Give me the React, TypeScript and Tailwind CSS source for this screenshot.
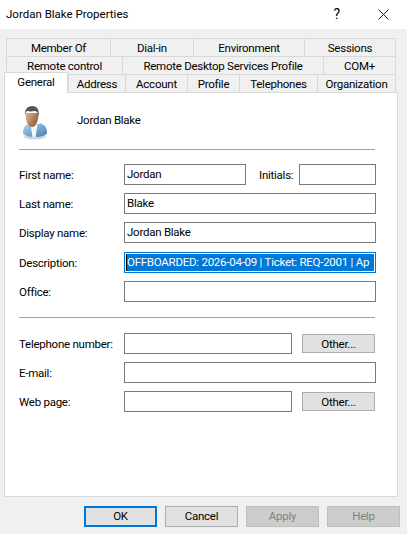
const Tab = ({ label, w, last }: { label: string; w: string; last?: boolean }) => (
  <div className={`${w} flex items-center justify-center pt-[2px] border-t border-l border-[#d9d9d9] whitespace-nowrap ${last ? 'border-r' : ''}`}>
    {label}
  </div>
);

const Field = ({ className = 'flex-1', children }: { className?: string; children?: React.ReactNode }) => (
  <div className={`${className} h-[21px] border border-[#7a7a7a] bg-white px-[2px] pt-[1px] flex items-center overflow-hidden whitespace-nowrap`}>
    {children}
  </div>
);

const Row = ({ label, className = 'mt-[8px]', children }: { label: string; className?: string; children: React.ReactNode }) => (
  <div className={`flex items-center ${className}`}>
    <div className="w-[105px] pt-[2px] whitespace-nowrap">{label}</div>
    {children}
  </div>
);

const OtherButton = () => (
  <div className="ml-[10px] w-[73px] h-[19px] pt-[2px] border border-[#adadad] bg-[#e1e1e1] flex items-center justify-center">Other...</div>
);

const UserIcon = () => (
  <svg width="26" height="34" viewBox="0 0 26 34">
    <defs>
      <linearGradient id="shirt" x1="0" y1="0" x2="1" y2="1">
        <stop offset="0" stopColor="#b4d6ee" />
        <stop offset="1" stopColor="#3f7fb5" />
      </linearGradient>
      <linearGradient id="skin" x1="0" y1="0" x2="1" y2="0.6">
        <stop offset="0" stopColor="#e2b994" />
        <stop offset="1" stopColor="#8d5f3b" />
      </linearGradient>
    </defs>
    <ellipse cx="13" cy="31" rx="11" ry="2.500" fill="#d3d6d9" />
    <path d="M1 27c0-5 2-8 6-9.500l6 1 6-1c4 1.500 6 4.500 6 9.500 0 2-5 4-12 4S1 29 1 27z" fill="url(#shirt)" />
    <path d="M8.500 18l2 13h3l2-12.500z" fill="#f5f7f9" />
    <path d="M3.500 7c0 8 2.500 14 6.500 14s6.500-6 6.500-14z" fill="url(#skin)" />
    <path d="M3 9C2.500 3 6 0 10.500 0S17.500 3.500 16.500 10C16 7 15 5.500 13 5c-3 .5-6 .5-8 0-1 1-1.700 2.500-2 4z" fill="#50565a" />
  </svg>
);

export default function App() {
  return (
    <div className="w-[407px] h-[534px] bg-[#f0f0f0] text-[11.5px] tracking-[-0.25px] leading-none text-black font-['Roboto',sans-serif] overflow-hidden">
      <div className="h-[29px] bg-white flex items-center pl-[6px] tracking-normal">
        <span className="flex-1">Jordan Blake Properties</span>
        <span className="text-[14px] mr-[38px] mb-[2px]">?</span>
        <svg width="11" height="11" viewBox="0 0 11 11" className="mr-[18px]">
          <path d="M.5.5l10 10M10.500.5l-10 10" stroke="#222" fill="none" />
        </svg>
      </div>

      <div className="pt-[9px]">
        <div className="ml-[6px] w-[390px] flex h-[18px]">
          <Tab label="Member Of" w="w-[104px]" />
          <Tab label="Dial-in" w="w-[83px]" />
          <Tab label="Environment" w="w-[111px]" />
          <Tab label="Sessions" w="w-[92px]" last />
        </div>
        <div className="ml-[6px] w-[390px] flex h-[18px]">
          <Tab label="Remote control" w="w-[116px]" />
          <Tab label="Remote Desktop Services Profile" w="w-[201px]" />
          <Tab label="COM+" w="w-[73px]" last />
        </div>
        <div className="ml-[4px] flex h-[18px]">
          <div className="relative z-10 -mt-[2px] h-[21px] w-[64px] bg-white border-t border-x border-[#d9d9d9] flex items-center justify-center">General</div>
          <Tab label="Address" w="w-[57px]" />
          <Tab label="Account" w="w-[62px]" />
          <Tab label="Profile" w="w-[52px]" />
          <Tab label="Telephones" w="w-[78px]" />
          <Tab label="Organization" w="w-[79px]" last />
        </div>
      </div>

      <div className="ml-[4px] w-[394px] h-[405px] bg-white border border-[#d9d9d9] pl-[14px] pr-[21px]">
        <div className="h-[56px] flex items-center">
          <div className="ml-[3px] w-[55px] mt-[3px]"><UserIcon /></div>
          <span>Jordan Blake</span>
        </div>
        <div className="h-px bg-[#a0a0a0] mr-[1px]" />

        <Row label="First name:" className="mt-[14px]">
          <Field className="w-[122px]">Jordan</Field>
          <span className="ml-[13px] w-[40px] pt-[2px]">Initials:</span>
          <Field className="w-[77px]" />
        </Row>
        <Row label="Last name:"><Field>Blake</Field></Row>
        <Row label="Display name:"><Field>Jordan Blake</Field></Row>
        <Row label="Description:" className="mt-[9px]">
          <div className="flex-1 h-[21px] border border-[#0078d7] bg-white flex items-center overflow-hidden whitespace-nowrap px-[1px]">
            <div className="w-full h-[17px] pt-[1px] bg-[#0078d7] text-white flex items-center overflow-hidden border-l border-black">
              OFFBOARDED: 2026-04-09 | Ticket: REQ-2001 | Ap
            </div>
          </div>
        </Row>
        <Row label="Office:"><Field /></Row>

        <div className="h-px bg-[#a0a0a0] mr-[1px] mt-[15px]" />

        <Row label="Telephone number:" className="mt-[15px]">
          <Field className="w-[168px]" />
          <OtherButton />
        </Row>
        <Row label="E-mail:"><Field /></Row>
        <Row label="Web page:">
          <Field className="w-[168px]" />
          <OtherButton />
        </Row>
      </div>

      <div className="flex justify-end gap-[8px] pr-[7px] mt-[9px]">
        <div className="w-[73px] h-[21px] pt-[1px] border-2 border-[#0078d7] bg-[#e1e1e1] flex items-center justify-center">OK</div>
        <div className="w-[73px] h-[21px] pt-[1px] border border-[#adadad] bg-[#e1e1e1] flex items-center justify-center">Cancel</div>
        <div className="w-[73px] h-[21px] pt-[1px] border border-[#bfbfbf] bg-[#cccccc] text-[#838383] flex items-center justify-center">Apply</div>
        <div className="w-[73px] h-[21px] pt-[1px] border border-[#bfbfbf] bg-[#cccccc] text-[#838383] flex items-center justify-center">Help</div>
      </div>
    </div>
  );
}
